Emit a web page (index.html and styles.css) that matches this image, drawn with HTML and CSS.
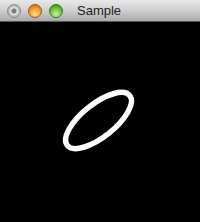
FILE: index.html
```html
<!DOCTYPE html>
<html lang="en">
<head>
    <meta charset="UTF-8">
    <title>Sample</title>
    <link rel="stylesheet" href="styles.css">
</head>
<body>
<div class="window">
    <div class="titlebar">
        <span class="btn btn-close"></span>
        <span class="btn btn-min"></span>
        <span class="btn btn-max"></span>
        <span class="title">Sample</span>
    </div>
    <div class="canvas">
        <svg width="200" height="200" viewBox="0 0 200 200">
            <ellipse cx="98.5" cy="98.5" rx="40" ry="16.5" fill="none" stroke="#fff" stroke-width="5.5" transform="rotate(-38.5 98.5 98.5)"/>
        </svg>
    </div>
</div>
</body>
</html>
```

FILE: styles.css
```css
*{
    margin: 0;
    padding: 0;
}
body{
    background: #000;
    width: 200px;
    height: 222px;
    overflow: hidden;
}
.titlebar{
    height: 22px;
    display: flex;
    align-items: center;
    padding-left: 7px;
    background: linear-gradient(#e9e9e9, #cfcfcf 50%, #a9a9a9);
    border-bottom: 1px solid #555;
    box-sizing: border-box;
}
.btn{
    width: 14px;
    height: 14px;
    border-radius: 50%;
    margin-right: 7px;
    box-sizing: border-box;
}
.btn-close{
    background: radial-gradient(circle at 50% 50%, #7a7a7a 0 2px, #dcdcdc 3px 4px, #b8b8b8 5px);
    border: 1px solid #8d8d8d;
}
.btn-min{
    background: radial-gradient(circle at 50% 75%, #ffe08a, #f39a2a 55%, #b95a10);
    border: 1px solid #9a5a1c;
}
.btn-max{
    background: radial-gradient(circle at 50% 75%, #c8f59c, #6bc03a 55%, #2f7a12);
    border: 1px solid #3d7a20;
}
.title{
    margin-left: 7px;
    font-family: "Liberation Sans", Arial, sans-serif;
    font-size: 13px;
    color: #222;
    line-height: 22px;
}
.canvas{
    height: 200px;
}
.canvas svg{
    display: block;
}
```
